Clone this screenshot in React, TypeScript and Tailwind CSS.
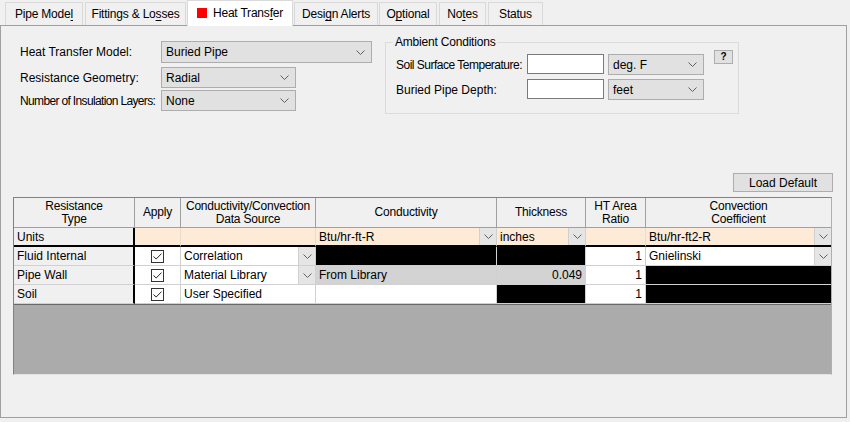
import React from "react";

function Chevron() {
  return (
    <svg width="9" height="5" viewBox="0 0 9 5">
      <path d="M0.5 0.5L4.5 4.5L8.5 0.5" fill="none" stroke="#606060" strokeWidth="1" />
    </svg>
  );
}

function Combo({ text, className }: { text: string; className: string }) {
  return (
    <div
      className={`flex items-center justify-between border border-[#adadad] bg-[#e1e1e1] pl-[4px] pr-[6px] ${className}`}
    >
      <span>{text}</span>
      <Chevron />
    </div>
  );
}

function CellDrop() {
  return (
    <div className="flex h-full w-[17px] items-center justify-center border-l border-[#d0d0d0] bg-[#e5e5e5]">
      <Chevron />
    </div>
  );
}

function Check() {
  return (
    <div className="flex h-[13px] w-[13px] items-center justify-center border border-[#333] bg-white">
      <svg width="9" height="7" viewBox="0 0 9 7">
        <path d="M0.5 3.5L3.2 6L8.5 0.6" fill="none" stroke="#222" strokeWidth="1" />
      </svg>
    </div>
  );
}

const U = ({ c }: { c: string }) => <span className="underline underline-offset-2">{c}</span>;

export default function App() {
  const cell = "box-border h-[19px] border-b border-r border-[#d0d0d0] flex items-center whitespace-nowrap";
  const head =
    "box-border h-[30px] border-b border-r border-[#a0a0a0] bg-[#f0f0f0] flex items-center justify-center text-center leading-[13px] tracking-[-0.2px]";
  const rowHead =
    "box-border h-[19px] border-b border-[#d0d0d0] border-r-2 border-r-black bg-[#f0f0f0] flex items-center pl-[3px]";

  return (
    <div className="h-[422px] w-[850px] overflow-hidden bg-[#f0f0f0] font-['Liberation_Sans',Arial,sans-serif] text-[12px] text-black">
      {/* tabs */}
      <div className="flex h-[25px] items-end whitespace-nowrap pl-[5px] tracking-[-0.2px]">
        <div className="flex h-[23px] w-[78px] items-center justify-center border border-b-0 border-[#d9d9d9] bg-[#f0f0f0]">
          <span>
            Pipe Mode<U c="l" />
          </span>
        </div>
        <div className="ml-[2px] flex h-[23px] w-[101px] items-center justify-center border border-b-0 border-[#d9d9d9] bg-[#f0f0f0]">
          <span>
            Fittings &amp; Lo<U c="s" />ses
          </span>
        </div>
        <div className="relative z-10 -mb-px ml-[1px] flex h-[26px] w-[106px] items-center justify-center gap-[6px] border border-b-0 border-[#d9d9d9] bg-white pb-[1px]">
          <div className="h-[10px] w-[10px] bg-[#f00]" />
          <span>
            Heat Trans<U c="f" />er
          </span>
        </div>
        <div className="ml-[1px] flex h-[23px] w-[84px] items-center justify-center border border-b-0 border-[#d9d9d9] bg-[#f0f0f0]">
          <span>
            Desi<U c="g" />n Alerts
          </span>
        </div>
        <div className="ml-[1px] flex h-[23px] w-[58px] items-center justify-center border border-b-0 border-[#d9d9d9] bg-[#f0f0f0]">
          <span>
            O<U c="p" />tional
          </span>
        </div>
        <div className="ml-[2px] flex h-[23px] w-[47px] items-center justify-center border border-b-0 border-[#d9d9d9] bg-[#f0f0f0]">
          <span>
            No<U c="t" />es
          </span>
        </div>
        <div className="ml-[2px] flex h-[23px] w-[55px] items-center justify-center border border-b-0 border-[#d9d9d9] bg-[#f0f0f0]">
          <span>Status</span>
        </div>
      </div>

      {/* panel */}
      <div className="box-border flex h-[393px] w-[847px] flex-col border border-[#a0a0a0]">
        <div className="flex whitespace-nowrap">
          {/* left form */}
          <div className="w-[384px] pl-[19px] pt-[15px]">
            <div className="flex h-[22px] items-center">
              <div className="w-[141px]">Heat Transfer Model:</div>
              <Combo text="Buried Pipe" className="h-[22px] w-[211px]" />
            </div>
            <div className="mt-[4px] flex h-[21px] items-center">
              <div className="w-[141px]">Resistance Geometry:</div>
              <Combo text="Radial" className="h-[21px] w-[135px]" />
            </div>
            <div className="mt-[2px] flex h-[21px] items-center">
              <div className="w-[141px] tracking-[-0.65px]">Number of Insulation Layers:</div>
              <Combo text="None" className="h-[21px] w-[135px]" />
            </div>
          </div>

          {/* ambient conditions */}
          <fieldset className="mt-[9px] box-border h-[79px] w-[354px] border border-[#dcdcdc]">
            <legend className="ml-[7px] px-[2px] leading-[14px] tracking-[-0.2px]">Ambient Conditions</legend>
            <div className="mt-[5px] flex">
              <div>
                <div className="flex h-[21px] items-center">
                  <div className="w-[141px] pl-[10px] tracking-[-0.5px]">Soil Surface Temperature:</div>
                  <div className="h-[20px] w-[77px] self-start border border-[#7a7a7a] bg-white" />
                  <Combo text="deg. F" className="ml-[4px] h-[21px] w-[96px]" />
                </div>
                <div className="mt-[4px] flex h-[21px] items-center">
                  <div className="w-[141px] pl-[10px]">Buried Pipe Depth:</div>
                  <div className="h-[20px] w-[77px] self-start border border-[#7a7a7a] bg-white" />
                  <Combo text="feet" className="ml-[4px] h-[21px] w-[96px]" />
                </div>
              </div>
              <div className="-mt-[4px] ml-[10px] flex h-[14px] w-[19px] items-center justify-center border border-[#adadad] bg-[#e1e1e1] text-[10px] font-bold leading-none">
                ?
              </div>
            </div>
          </fieldset>
        </div>

        <div className="mt-[59px] flex justify-end pr-[13px]">
          <div className="flex h-[19px] w-[100px] items-center justify-center border border-[#adadad] bg-[#e1e1e1]">
            Load Default
          </div>
        </div>

        {/* table */}
        <div className="ml-[12px] mt-[5px] box-border flex h-[178px] w-[819px] flex-col border border-[#828282] border-b-[#e3e3e3] border-r-[#b0b0b0]">
          <div className="grid grid-cols-[121px_46px_135px_181px_89px_60px_185px]">
            {/* header */}
            <div className={head}>
              Resistance
              <br />
              Type
            </div>
            <div className={head}>Apply</div>
            <div className={head}>
              Conductivity/Convection
              <br />
              Data Source
            </div>
            <div className={head}>Conductivity</div>
            <div className={head}>Thickness</div>
            <div className={head}>
              HT Area
              <br />
              Ratio
            </div>
            <div className={`${head} border-r-0`}>
              Convection
              <br />
              Coefficient
            </div>

            {/* units */}
            <div className="box-border flex h-[19px] items-center border-b-2 border-r-2 border-black bg-[#f0f0f0] pl-[3px]">
              Units
            </div>
            <div className="box-border h-[19px] border-b-2 border-r border-b-black border-r-[#e8dccd] bg-[#fdead7]" />
            <div className="box-border h-[19px] border-b-2 border-r border-b-black border-r-[#e8dccd] bg-[#fdead7]" />
            <div className="box-border flex h-[19px] items-center justify-between border-b-2 border-r border-b-black border-r-[#d0d0d0] bg-[#fdead7] pl-[3px]">
              <span>Btu/hr-ft-R</span>
              <CellDrop />
            </div>
            <div className="box-border flex h-[19px] items-center justify-between border-b-2 border-r border-b-black border-r-[#d0d0d0] bg-[#fdead7] pl-[3px]">
              <span>inches</span>
              <CellDrop />
            </div>
            <div className="box-border h-[19px] border-b-2 border-r border-b-black border-r-[#e8dccd] bg-[#fdead7]" />
            <div className="box-border flex h-[19px] items-center justify-between border-b-2 border-b-black bg-[#fdead7] pl-[3px]">
              <span>Btu/hr-ft2-R</span>
              <CellDrop />
            </div>

            {/* Fluid Internal */}
            <div className={rowHead}>Fluid Internal</div>
            <div className={`${cell} justify-center bg-white`}>
              <Check />
            </div>
            <div className={`${cell} justify-between bg-white pl-[3px]`}>
              <span>Correlation</span>
              <CellDrop />
            </div>
            <div className={`${cell} bg-black`} />
            <div className={`${cell} bg-black`} />
            <div className={`${cell} justify-end bg-white pr-[3px]`}>1</div>
            <div className={`${cell} justify-between border-r-0 bg-white pl-[3px]`}>
              <span>Gnielinski</span>
              <CellDrop />
            </div>

            {/* Pipe Wall */}
            <div className={rowHead}>Pipe Wall</div>
            <div className={`${cell} justify-center bg-white`}>
              <Check />
            </div>
            <div className={`${cell} justify-between bg-white pl-[3px]`}>
              <span>Material Library</span>
              <CellDrop />
            </div>
            <div className={`${cell} bg-[#d3d3d3] pl-[3px]`}>From Library</div>
            <div className={`${cell} justify-end bg-[#d3d3d3] pr-[3px]`}>0.049</div>
            <div className={`${cell} justify-end bg-white pr-[3px]`}>1</div>
            <div className={`${cell} border-r-0 bg-black`} />

            {/* Soil */}
            <div className={rowHead}>Soil</div>
            <div className={`${cell} justify-center bg-white`}>
              <Check />
            </div>
            <div className={`${cell} bg-white pl-[3px]`}>User Specified</div>
            <div className={`${cell} bg-white`} />
            <div className={`${cell} bg-black`} />
            <div className={`${cell} justify-end bg-white pr-[3px]`}>1</div>
            <div className={`${cell} border-r-0 bg-black`} />
          </div>
          <div className="flex-1 border-t border-[#696969] bg-[#ababab]" />
        </div>
      </div>
    </div>
  );
}
